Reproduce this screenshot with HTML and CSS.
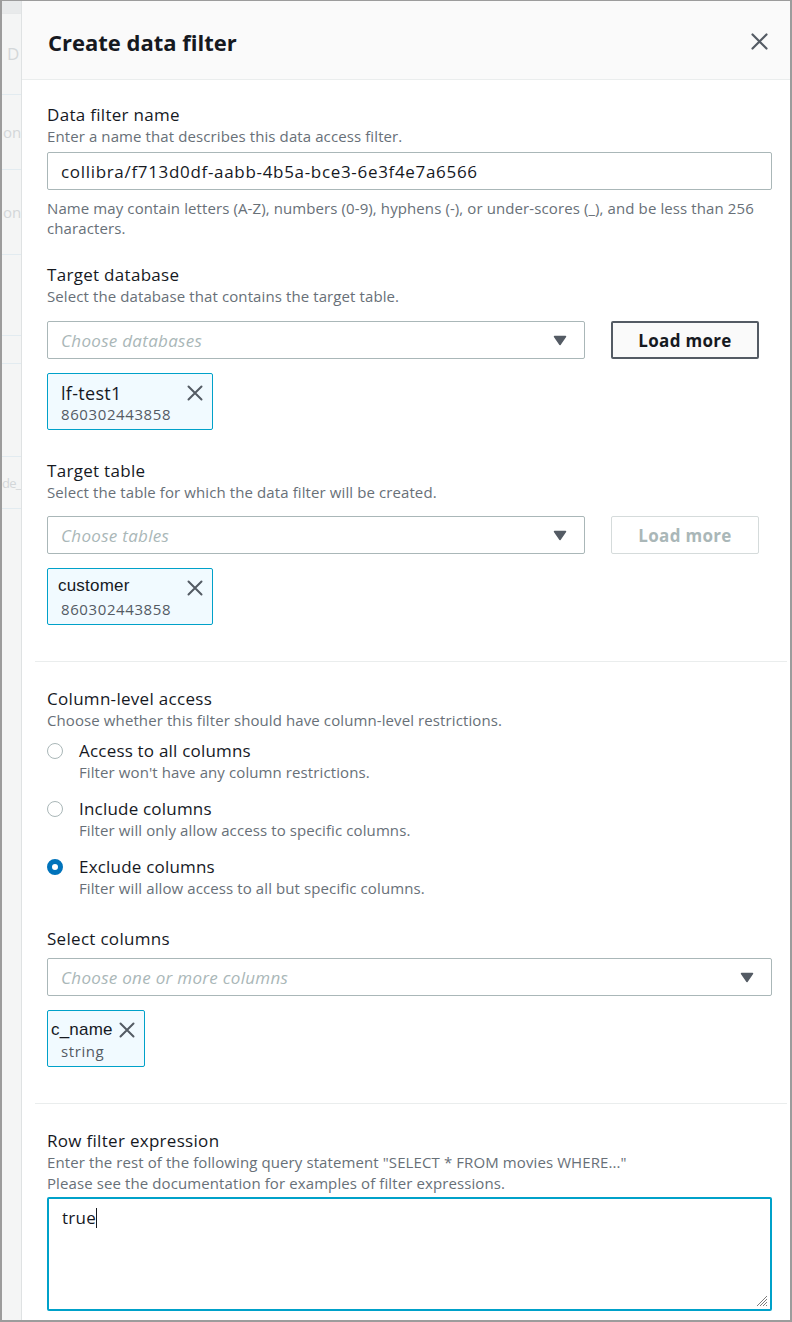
FILE: index.html
```html
<!DOCTYPE html>
<html lang="en">
<head>
<meta charset="utf-8">
<title>Create data filter</title>
<link rel="stylesheet" href="styles.css">
</head>
<body>
<div class="frame">
  <div class="backdrop">
    <div class="bg-row band"></div>
    <div class="bg-row r1"><span class="bg-text t-d">D</span></div>
    <div class="bg-row r2"><span class="bg-text">on</span></div>
    <div class="bg-row r3"><span class="bg-text">on</span></div>
    <div class="bg-row r4"></div>
    <div class="bg-row r5"></div>
    <div class="bg-row r6"></div>
    <div class="bg-row r7"><span class="bg-text t-de">de_</span></div>
    <div class="bg-row r8"></div>
  </div>

  <div class="panel">
    <header class="panel-header">
      <h2 class="panel-title">Create data filter</h2>
      <span class="close-btn" aria-label="Close">
        <svg width="17" height="17" viewBox="0 0 17 17"><path d="M1.5 1.5 L15.5 15.5 M15.5 1.5 L1.5 15.5" stroke="#545b64" stroke-width="2.2" fill="none" stroke-linecap="round"/></svg>
      </span>
    </header>

    <div class="panel-body">
      <div class="field">
        <div class="label">Data filter name</div>
        <div class="desc">Enter a name that describes this data access filter.</div>
        <div class="input f-name-input">collibra/f713d0df-aabb-4b5a-bce3-6e3f4e7a6566</div>
        <div class="hint">Name may contain letters (A-Z), numbers (0-9), hyphens (-), or under-scores (_), and be less than 256<br>characters.</div>
      </div>

      <div class="field f-db">
        <div class="label">Target database</div>
        <div class="desc">Select the database that contains the target table.</div>
        <div class="select-row">
          <div class="select narrow">
            <span class="placeholder">Choose databases</span>
            <svg class="caret" width="14" height="11" viewBox="0 0 14 11"><path d="M1.5 1.5 H12.5 L7 9.5 Z" fill="#545b64" stroke="#545b64" stroke-width="1.5" stroke-linejoin="round"/></svg>
          </div>
          <span class="btn">Load more</span>
        </div>
        <div class="token token-wide">
          <div class="tok-text">
            <div class="tok-name">lf-test1</div>
            <div class="tok-sub">860302443858</div>
          </div>
          <svg class="tok-x" width="16" height="16" viewBox="0 0 16 16"><path d="M1.5 1.5 L14.5 14.5 M14.5 1.5 L1.5 14.5" stroke="#545b64" stroke-width="2" fill="none" stroke-linecap="round"/></svg>
        </div>
      </div>

      <div class="field f-table">
        <div class="label">Target table</div>
        <div class="desc">Select the table for which the data filter will be created.</div>
        <div class="select-row">
          <div class="select narrow">
            <span class="placeholder">Choose tables</span>
            <svg class="caret" width="14" height="11" viewBox="0 0 14 11"><path d="M1.5 1.5 H12.5 L7 9.5 Z" fill="#545b64" stroke="#545b64" stroke-width="1.5" stroke-linejoin="round"/></svg>
          </div>
          <span class="btn btn-disabled">Load more</span>
        </div>
        <div class="token token-wide token-cust">
          <div class="tok-text">
            <div class="tok-name alt">customer</div>
            <div class="tok-sub">860302443858</div>
          </div>
          <svg class="tok-x" width="16" height="16" viewBox="0 0 16 16"><path d="M1.5 1.5 L14.5 14.5 M14.5 1.5 L1.5 14.5" stroke="#545b64" stroke-width="2" fill="none" stroke-linecap="round"/></svg>
        </div>
      </div>

      <div class="divider"></div>

      <div class="field f-col">
        <div class="label">Column-level access</div>
        <div class="desc">Choose whether this filter should have column-level restrictions.</div>
        <div class="radio-group">
          <div class="radio-item">
            <span class="radio"></span>
            <div class="radio-text">
              <div class="radio-label">Access to all columns</div>
              <div class="desc">Filter won't have any column restrictions.</div>
            </div>
          </div>
          <div class="radio-item">
            <span class="radio"></span>
            <div class="radio-text">
              <div class="radio-label">Include columns</div>
              <div class="desc">Filter will only allow access to specific columns.</div>
            </div>
          </div>
          <div class="radio-item">
            <span class="radio checked"></span>
            <div class="radio-text">
              <div class="radio-label">Exclude columns</div>
              <div class="desc">Filter will allow access to all but specific columns.</div>
            </div>
          </div>
        </div>
      </div>

      <div class="field f-sel">
        <div class="label">Select columns</div>
        <div class="select full">
          <span class="placeholder">Choose one or more columns</span>
          <svg class="caret" width="14" height="11" viewBox="0 0 14 11"><path d="M1.5 1.5 H12.5 L7 9.5 Z" fill="#545b64" stroke="#545b64" stroke-width="1.5" stroke-linejoin="round"/></svg>
        </div>
        <div class="token token-col">
          <div class="tok-text">
            <div class="tok-name alt2">c_name</div>
            <div class="tok-sub sub-indent">string</div>
          </div>
          <svg class="tok-x" width="16" height="16" viewBox="0 0 16 16"><path d="M1.5 1.5 L14.5 14.5 M14.5 1.5 L1.5 14.5" stroke="#545b64" stroke-width="2" fill="none" stroke-linecap="round"/></svg>
        </div>
      </div>

      <div class="divider"></div>

      <div class="field f-row">
        <div class="label">Row filter expression</div>
        <div class="desc desc-tall">Enter the rest of the following query statement "SELECT * FROM movies WHERE..."</div>
        <div class="desc desc-tall">Please see the documentation for examples of filter expressions.</div>
        <div class="textarea">
          <span class="ta-text">true</span><span class="cursor"></span>
          <svg class="resize" width="14" height="14" viewBox="0 0 14 14"><path d="M13 3 L3 13 M13 6 L6 13 M13 9 L9 13 M13 12 L12 13" stroke="#7d7d7d" stroke-width="1" fill="none"/></svg>
        </div>
      </div>
    </div>
  </div>
</div>
</body>
</html>
```

FILE: styles.css
```css
* { box-sizing: border-box; }

html, body {
  margin: 0;
  padding: 0;
  background: #ffffff;
}

body {
  font-family: "Open Sans", "Noto Sans", "Liberation Sans", sans-serif;
  color: #16191f;
}

.frame {
  width: 792px;
  height: 1322px;
  border-style: solid;
  border-color: #9c9c9c;
  border-width: 1px 2px 2px 2px;
  display: flex;
  overflow: hidden;
}

/* background page strip behind the side panel */
.backdrop {
  width: 19px;
  flex: 0 0 19px;
  background: #f4f5f5;
  display: flex;
  flex-direction: column;
  overflow: hidden;
}

.bg-row {
  border-bottom: 1px solid #e2ebf0;
  display: flex;
  align-items: center;
  white-space: nowrap;
}

.band { height: 13px; background: #e8eaeb; border-bottom: 1px solid #e6e8e9; }
.r1 { height: 81px; }
.r2 { height: 75px; }
.r3 { height: 85px; }
.r4 { height: 81px; }
.r5 { height: 28px; }
.r6 { height: 93px; }
.r7 { height: 52px; }
.r8 { flex: 1; border-bottom: none; }

.bg-text {
  font-size: 15px;
  line-height: 18px;
  color: #d3d7d9;
  padding-left: 1px;
}
.t-d { padding-left: 5px; font-size: 17px; }
.t-de { font-size: 13px; letter-spacing: -0.8px; padding-left: 0; }

/* side panel */
.panel {
  flex: 1;
  border-left: 1px solid #dfe2e3;
  display: flex;
  flex-direction: column;
  background: #ffffff;
}

.panel-header {
  height: 79px;
  flex: 0 0 79px;
  background: #fafafa;
  border-bottom: 1px solid #eaeded;
  display: flex;
  align-items: center;
  justify-content: space-between;
  padding: 3px 22px 0 26px;
}

.panel-title {
  margin: 0;
  font-size: 22px;
  font-weight: 700;
  line-height: 28px;
  color: #16191f;
}

.close-btn {
  display: flex;
  width: 17px;
  height: 17px;
}

.panel-body {
  padding: 24px 18px 0 25px;
}

.label {
  font-size: 17px;
  letter-spacing: 0.3px;
  line-height: 22px;
  color: #16191f;
}

.desc {
  font-size: 15px;
  letter-spacing: 0.1px;
  line-height: 20px;
  color: #687078;
}

.desc-tall { line-height: 21px; }

.hint {
  margin-top: 8px;
  font-size: 15px;
  letter-spacing: 0.1px;
  line-height: 20px;
  color: #687078;
}

.input {
  margin-top: 6px;
  height: 38px;
  border: 1px solid #aab7b8;
  border-radius: 2px;
  padding: 0 13px;
  display: flex;
  align-items: center;
  font-size: 17px;
  letter-spacing: 0.68px;
  color: #16191f;
}

.f-db { margin-top: 26px; }
.f-table { margin-top: 30px; }

.select-row {
  margin-top: 15px;
  display: flex;
  align-items: center;
}
.f-table .select-row { margin-top: 14px; }

.select {
  height: 38px;
  border: 1px solid #aab7b8;
  border-radius: 2px;
  padding: 0 17px 0 13px;
  display: flex;
  align-items: center;
  justify-content: space-between;
}

.select.narrow { width: 538px; flex: 0 0 538px; }
.select.full { width: 725px; margin-top: 8px; padding-right: 17px; }

.placeholder {
  font-size: 17px;
  letter-spacing: 0.3px;
  font-style: italic;
  color: #aab7b8;
}

.caret { display: block; }

.btn {
  margin-left: 26px;
  width: 148px;
  height: 38px;
  border: 2px solid #545b64;
  border-radius: 2px;
  background: #fafafa;
  display: flex;
  align-items: center;
  justify-content: center;
  font-size: 17px;
  letter-spacing: 0.3px;
  font-weight: 700;
  color: #16191f;
}

.btn-disabled {
  border: 1px solid #d5dbdb;
  background: #ffffff;
  color: #aab7b8;
}

.token {
  margin-top: 14px;
  height: 57px;
  border: 1px solid #00a1c9;
  border-radius: 2px;
  background: #f1faff;
  display: flex;
  justify-content: space-between;
  align-items: flex-start;
  padding: 8px 9px 0 13px;
}

.token-wide { width: 166px; }
.token-col { width: 98px; padding-left: 3px; }
.token-cust { padding-left: 10px; }

.tok-name {
  font-size: 18px;
  letter-spacing: 0.3px;
  line-height: 22px;
  color: #16191f;
}

.tok-name.alt {
  font-family: "Liberation Sans", Arial, sans-serif;
  font-size: 17px;
  letter-spacing: 0.2px;
  margin-top: -2px;
  margin-bottom: 2px;
}

.tok-name.alt2 {
  font-family: "Liberation Sans", Arial, sans-serif;
  font-size: 17px;
  letter-spacing: 0.2px;
}

.tok-sub {
  font-size: 15px;
  letter-spacing: 0.6px;
  line-height: 20px;
  color: #545b64;
}

.token-cust .tok-sub { margin-left: 3px; }
.sub-indent { margin-left: 10px; }

.tok-x { margin-top: 3px; flex: 0 0 16px; }

.divider {
  margin: 36px -15px 0 -12px;
  height: 1px;
  background: #eaeded;
}

.f-col { margin-top: 26px; }

.radio-group { margin-top: 10px; }

.radio-item {
  display: flex;
  align-items: flex-start;
  margin-top: 16px;
}
.radio-item:first-child { margin-top: 0; }

.radio {
  width: 16px;
  height: 16px;
  flex: 0 0 16px;
  margin-top: 3px;
  border: 1.5px solid #aab7b8;
  border-radius: 50%;
  background: #ffffff;
}

.radio.checked {
  border: 5px solid #0073bb;
}

.radio-text { margin-left: 16px; }

.radio-label {
  font-size: 17px;
  letter-spacing: 0.2px;
  line-height: 22px;
  color: #16191f;
}

.f-sel { margin-top: 30px; }

.f-row { margin-top: 26px; }

.textarea {
  position: relative;
  margin-top: 3px;
  width: 725px;
  height: 114px;
  border: 2px solid #00a1c9;
  border-radius: 2px;
  padding: 8px 13px;
  font-size: 17px;
  letter-spacing: 0.3px;
  line-height: 22px;
  color: #16191f;
  display: flex;
  align-items: flex-start;
}

.cursor {
  display: inline-block;
  width: 1px;
  height: 20px;
  margin-top: 1px;
  background: #16191f;
}

.resize {
  position: absolute;
  right: 2px;
  bottom: 2px;
}
```
